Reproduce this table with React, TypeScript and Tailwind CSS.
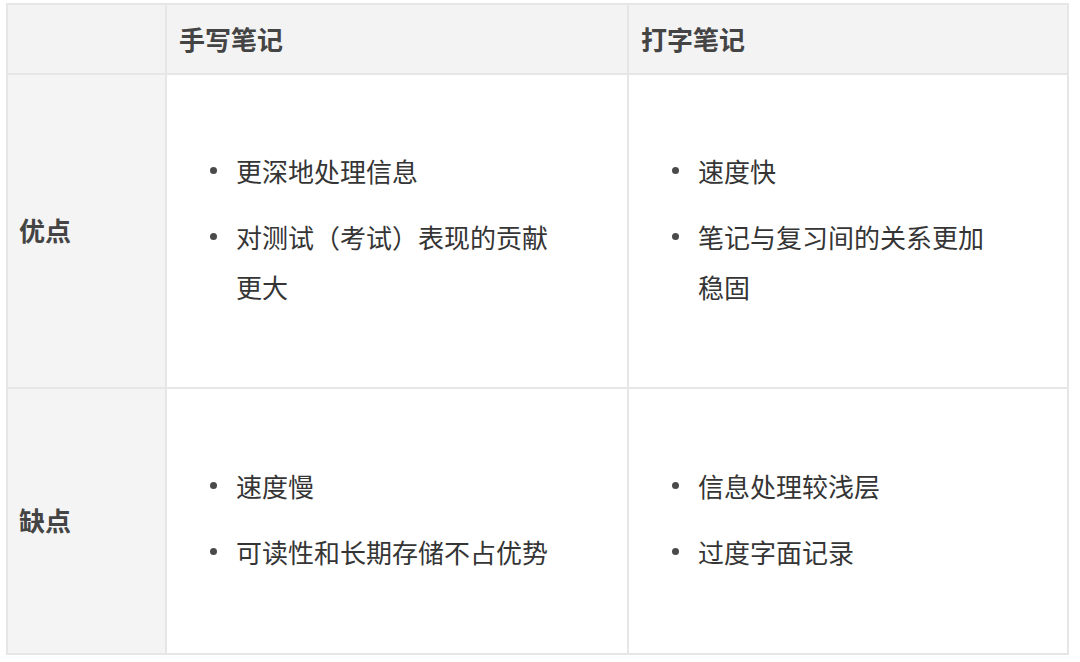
const rows = [
  {
    label: "优点",
    height: "h-[314px]",
    hand: ["更深地处理信息", "对测试（考试）表现的贡献更大"],
    typed: ["速度快", "笔记与复习间的关系更加稳固"],
  },
  {
    label: "缺点",
    height: "h-[266px]",
    hand: ["速度慢", "可读性和长期存储不占优势"],
    typed: ["信息处理较浅层", "过度字面记录"],
  },
];

function BulletList({ items }: { items: string[] }) {
  return (
    <ul className="flex flex-col gap-[16px] pl-[43px] pr-[60px]">
      {items.map((item) => (
        <li key={item} className="flex items-start leading-[50px]">
          <span className="mt-[21px] mr-[19px] h-[7px] w-[7px] shrink-0 rounded-full bg-[#4a4a4a]" />
          <span>{item}</span>
        </li>
      ))}
    </ul>
  );
}

export default function App() {
  return (
    <div
      className="h-[662px] w-[1080px] overflow-hidden bg-white pt-[3px] pl-[6px] text-[26px] text-[#353535]"
      style={{ fontFamily: '"Noto Sans CJK SC", "Noto Sans", sans-serif' }}
    >
      <div className="grid w-[1063px] grid-cols-[159px_462px_440px] border-t-2 border-l-2 border-[#e6e6e6]">
        <div className="h-[70px] border-r-2 border-b-2 border-[#e6e6e6] bg-[#f3f3f3]" />
        <div className="flex h-[70px] items-center border-r-2 border-b-2 border-[#e6e6e6] bg-[#f3f3f3] pb-[2px] pl-[12px] font-semibold text-[#444]">
          手写笔记
        </div>
        <div className="flex h-[70px] items-center border-r-2 border-b-2 border-[#e6e6e6] bg-[#f3f3f3] pb-[2px] pl-[12px] font-semibold text-[#444]">
          打字笔记
        </div>

        {rows.map((row) => (
          <div key={row.label} className="contents">
            <div
              className={`flex ${row.height} items-center border-r-2 border-b-2 border-[#e6e6e6] bg-[#f4f4f4] pb-[4px] pl-[11px] font-semibold text-[#444]`}
            >
              {row.label}
            </div>
            <div className={`flex ${row.height} items-center border-r-2 border-b-2 border-[#e6e6e6] bg-white pb-[4px]`}>
              <BulletList items={row.hand} />
            </div>
            <div className={`flex ${row.height} items-center border-r-2 border-b-2 border-[#e6e6e6] bg-white pb-[4px]`}>
              <BulletList items={row.typed} />
            </div>
          </div>
        ))}
      </div>
    </div>
  );
}
